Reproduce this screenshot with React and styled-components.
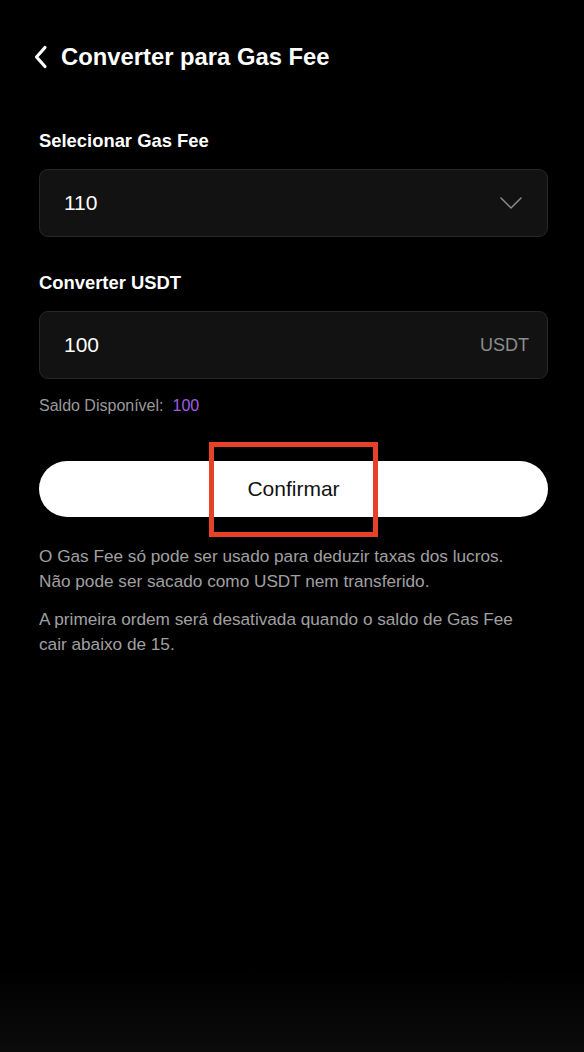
import styled, { createGlobalStyle } from 'styled-components';

const GlobalStyle = createGlobalStyle`
  html, body {
    margin: 0;
    padding: 0;
    background: #000;
  }
  body {
    font-family: "Liberation Sans", Arial, sans-serif;
  }
`;

const Page = styled.div`
  position: relative;
  width: 584px;
  height: 1052px;
  background: linear-gradient(to bottom, #000 0%, #000 92%, #0b0b0b 100%);
  color: #fff;
  padding: 0 36px 0 39px;
  box-sizing: border-box;
  overflow: hidden;
`;

const Header = styled.div`
  display: flex;
  align-items: center;
  gap: 12px;
  height: 30px;
  margin-top: 42px;
  margin-left: -6px;
`;

const Title = styled.h1`
  margin: 0;
  font-size: 23.8px;
  font-weight: 700;
`;

const Label = styled.div`
  font-size: 18.4px;
  font-weight: 700;
  margin-top: ${(p) => p.top}px;
  line-height: 22px;
`;

const Field = styled.div`
  display: flex;
  align-items: center;
  justify-content: space-between;
  height: 68px;
  margin-top: 17px;
  padding: 0 18px 0 24px;
  box-sizing: border-box;
  background: #121212;
  border: 1px solid #272727;
  border-radius: 9px;
`;

const Value = styled.span`
  font-size: 21px;
  color: #fff;
`;

const Unit = styled.span`
  font-size: 18px;
  color: #8c8c8c;
`;

const Arrow = styled.span`
  display: flex;
  margin-right: 7px;
`;

const Balance = styled.div`
  margin-top: 18px;
  font-size: 16px;
  color: #9a9a9a;
  display: flex;
  gap: 9px;
`;

const Amount = styled.span`
  color: #a35ee0;
`;

const Button = styled.button`
  display: block;
  width: 100%;
  height: 56px;
  margin-top: 46px;
  border: none;
  border-radius: 28px;
  background: #fff;
  color: #111;
  font-family: inherit;
  font-size: 21px;
`;

const Note = styled.p`
  margin: ${(p) => p.top}px 0 0;
  padding-right: 24px;
  font-size: 17.2px;
  line-height: 25px;
  color: #a0a0a0;
`;

const Highlight = styled.div`
  position: absolute;
  left: 209px;
  top: 442px;
  width: 169px;
  height: 95px;
  box-sizing: border-box;
  border: 5px solid #e8412a;
  pointer-events: none;
`;

const Back = () => (
  <svg width="16" height="24" viewBox="0 0 16 24" fill="none">
    <path d="M12 2.5 L3.5 12 L12 21.5" stroke="#fff" strokeWidth="3.2" strokeLinecap="round" strokeLinejoin="round" />
  </svg>
);

const Chevron = () => (
  <svg width="22" height="12" viewBox="0 0 22 12" fill="none">
    <path d="M1 1 L11 11 L21 1" stroke="#8a8a8a" strokeWidth="1.5" strokeLinecap="round" strokeLinejoin="round" />
  </svg>
);

export default function App() {
  return (
    <>
      <GlobalStyle />
      <Page>
        <Header>
          <Back />
          <Title>Converter para Gas Fee</Title>
        </Header>

        <Label top={58}>Selecionar Gas Fee</Label>
        <Field>
          <Value>110</Value>
          <Arrow>
            <Chevron />
          </Arrow>
        </Field>

        <Label top={35}>Converter USDT</Label>
        <Field>
          <Value>100</Value>
          <Unit>USDT</Unit>
        </Field>

        <Balance>
          <span>Saldo Disponível:</span>
          <Amount>100</Amount>
        </Balance>

        <Button>Confirmar</Button>

        <Note top={27}>
          O Gas Fee só pode ser usado para deduzir taxas dos lucros.
          <br />
          Não pode ser sacado como USDT nem transferido.
        </Note>
        <Note top={13}>
          A primeira ordem será desativada quando o saldo de Gas Fee cair abaixo de 15.
        </Note>

        <Highlight />
      </Page>
    </>
  );
}
